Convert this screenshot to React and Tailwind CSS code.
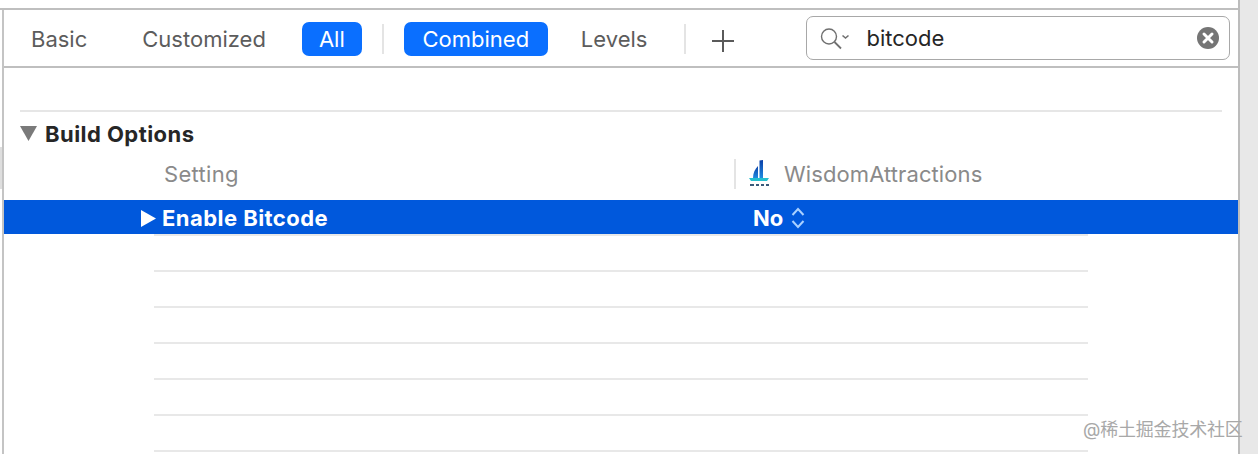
const TabText = ({ children, className = '' }) => (
    <span className={`text-[22px] leading-none text-[#5c5c5c] ${className}`}>{children}</span>
);

const Pill = ({ children, className = '' }) => (
    <span className={`h-[34px] flex items-center justify-center bg-[#0a6fff] rounded-[7px] text-white text-[22px] leading-none ${className}`}>{children}</span>
);

const Divider = ({ className = '' }) => <span className={`w-[2px] h-[30px] bg-[#e4e4e4] ${className}`} />;

const SearchIcon = () => (
    <svg width="32" height="26" viewBox="0 0 32 26" fill="none" stroke="#707070" className="shrink-0">
        <circle cx="10" cy="11.5" r="7.5" strokeWidth="1.4" />
        <path d="M15.5 17L22 23.5" strokeWidth="1.8" />
        <path d="M23.5 10.5L26.5 13L29.5 10.5" strokeWidth="1.6" />
    </svg>
);

const ClearIcon = () => (
    <svg width="22" height="22" viewBox="0 0 22 22" className="shrink-0">
        <circle cx="11" cy="11" r="11" fill="#757575" />
        <path d="M7 7L15 15M15 7L7 15" stroke="#fff" strokeWidth="3" strokeLinecap="round" />
    </svg>
);

const AppIcon = () => (
    <svg width="24" height="30" viewBox="0 0 24 30" className="shrink-0">
        <defs>
            <linearGradient id="sail" x1="0" y1="0" x2="0" y2="1">
                <stop offset="0" stopColor="#0b3fa8" />
                <stop offset="1" stopColor="#1f8be0" />
            </linearGradient>
        </defs>
        <path d="M6 19C6 14 8 10 11 7V19Z" fill="url(#sail)" />
        <path d="M12.5 1.5L16 1V19H12.5Z" fill="url(#sail)" />
        <path d="M2 19H22L20 22H4Z" fill="#25c0cf" />
        <path d="M3 26H7M9 26H12M14 26H17M19 26H22" stroke="#3a5a7a" strokeWidth="2" />
    </svg>
);

const UpDownIcon = () => (
    <svg width="14" height="22" viewBox="0 0 14 22" fill="none" stroke="#a9d0ff" strokeWidth="2" className="shrink-0">
        <path d="M1.5 8L7 2L12.5 8" />
        <path d="M1.5 14L7 20L12.5 14" />
    </svg>
);

const EMPTY_ROWS = [1, 2, 3, 4, 5, 6];

const App = () => {
    return (
        <div className="relative w-[1258px] h-[454px] overflow-hidden flex bg-white font-['Inter','Noto_Sans_CJK_SC',sans-serif]">
            <div className="w-[1240px] shrink-0 flex flex-col border-r-2 border-[#bcbcbc]">
                <div className="h-[10px] shrink-0 border-b-2 border-[#bfbfbf]" />
                <div className="flex-1 flex min-h-0">
                    {/* left edge with the sliver of the neighbouring panel */}
                    <div className="w-[4px] shrink-0 border-r-2 border-[#c4c4c4] pt-[137px]">
                        <div className="w-[2px] h-[42px] bg-[#dedede]" />
                    </div>
                    <div className="flex-1 min-w-0 flex flex-col">
                        <div className="h-[58px] shrink-0 flex items-center pt-[2px] border-b-2 border-[#bfbfbf]">
                            <TabText className="ml-[27px]">Basic</TabText>
                            <TabText className="ml-[55px]">Customized</TabText>
                            <Pill className="ml-[36px] w-[60px]">All</Pill>
                            <Divider className="ml-[20px]" />
                            <Pill className="ml-[20px] w-[144px]">Combined</Pill>
                            <TabText className="ml-[33px]">Levels</TabText>
                            <Divider className="ml-[37px]" />
                            <svg width="24" height="24" viewBox="0 0 24 24" stroke="#5a5a5a" strokeWidth="2" className="ml-[25px] mt-[4px] shrink-0">
                                <path d="M1 12H23M12 1V23" />
                            </svg>
                            <div className="ml-[71px] mb-[2px] w-[424px] h-[44px] flex items-center border border-[#a8a8a8] rounded-[7px] pl-[12px] pr-[10px]">
                                <SearchIcon />
                                <span className="ml-[15px] text-[22px] leading-none text-[#262626]">bitcode</span>
                                <span className="ml-auto"><ClearIcon /></span>
                            </div>
                        </div>
                        <div className="h-[44px] shrink-0 mx-[16px] border-b-2 border-[#e6e6e6]" />
                        <div className="h-[45px] shrink-0 flex items-center pl-[16px] pb-[2px]">
                            <svg width="17" height="15" viewBox="0 0 17 15" className="shrink-0">
                                <path d="M0 0H17L8.5 15Z" fill="#7a7a7a" />
                            </svg>
                            <span className="ml-[8px] text-[22px] leading-none font-bold tracking-[0.45px] text-[#262626]">Build Options</span>
                        </div>
                        <div className="h-[43px] shrink-0 flex items-center pb-[10px]">
                            <span className="ml-[160px] w-[570px] text-[22px] leading-none tracking-[0.3px] text-[#8a8a8a]">Setting</span>
                            <Divider className="h-[28px]" />
                            <span className="ml-[11px]"><AppIcon /></span>
                            <span className="ml-[13px] text-[22px] leading-none tracking-[0.1px] text-[#8a8a8a]">WisdomAttractions</span>
                        </div>
                        <div className="h-[34px] shrink-0 flex items-center pt-[2px] bg-[#0058dc]">
                            <svg width="15" height="17" viewBox="0 0 15 17" className="ml-[137px] shrink-0">
                                <path d="M0 0L15 8.5L0 17Z" fill="#fff" />
                            </svg>
                            <span className="ml-[6px] w-[591px] text-[22px] leading-none font-bold tracking-[0.45px] text-white">Enable Bitcode</span>
                            <span className="text-[22px] leading-none font-bold text-white">No</span>
                            <span className="ml-[8px]"><UpDownIcon /></span>
                        </div>
                        <div className="ml-[150px] w-[934px] border-t-2 border-[#e8e8e8]">
                            {EMPTY_ROWS.map((row) => (
                                <div key={row} className="h-[36px] border-b-2 border-[#e8e8e8]" />
                            ))}
                        </div>
                    </div>
                </div>
            </div>
            <div className="flex-1 bg-[#e8e8e8]" />
            {/* watermark sits over the panel edge */}
            <span className="absolute left-[1083px] top-[418px] text-[18px] leading-[24px] tracking-[-0.2px] whitespace-nowrap text-[#a8a8a8]">@稀土掘金技术社区</span>
        </div>
    );
};

export default App;
